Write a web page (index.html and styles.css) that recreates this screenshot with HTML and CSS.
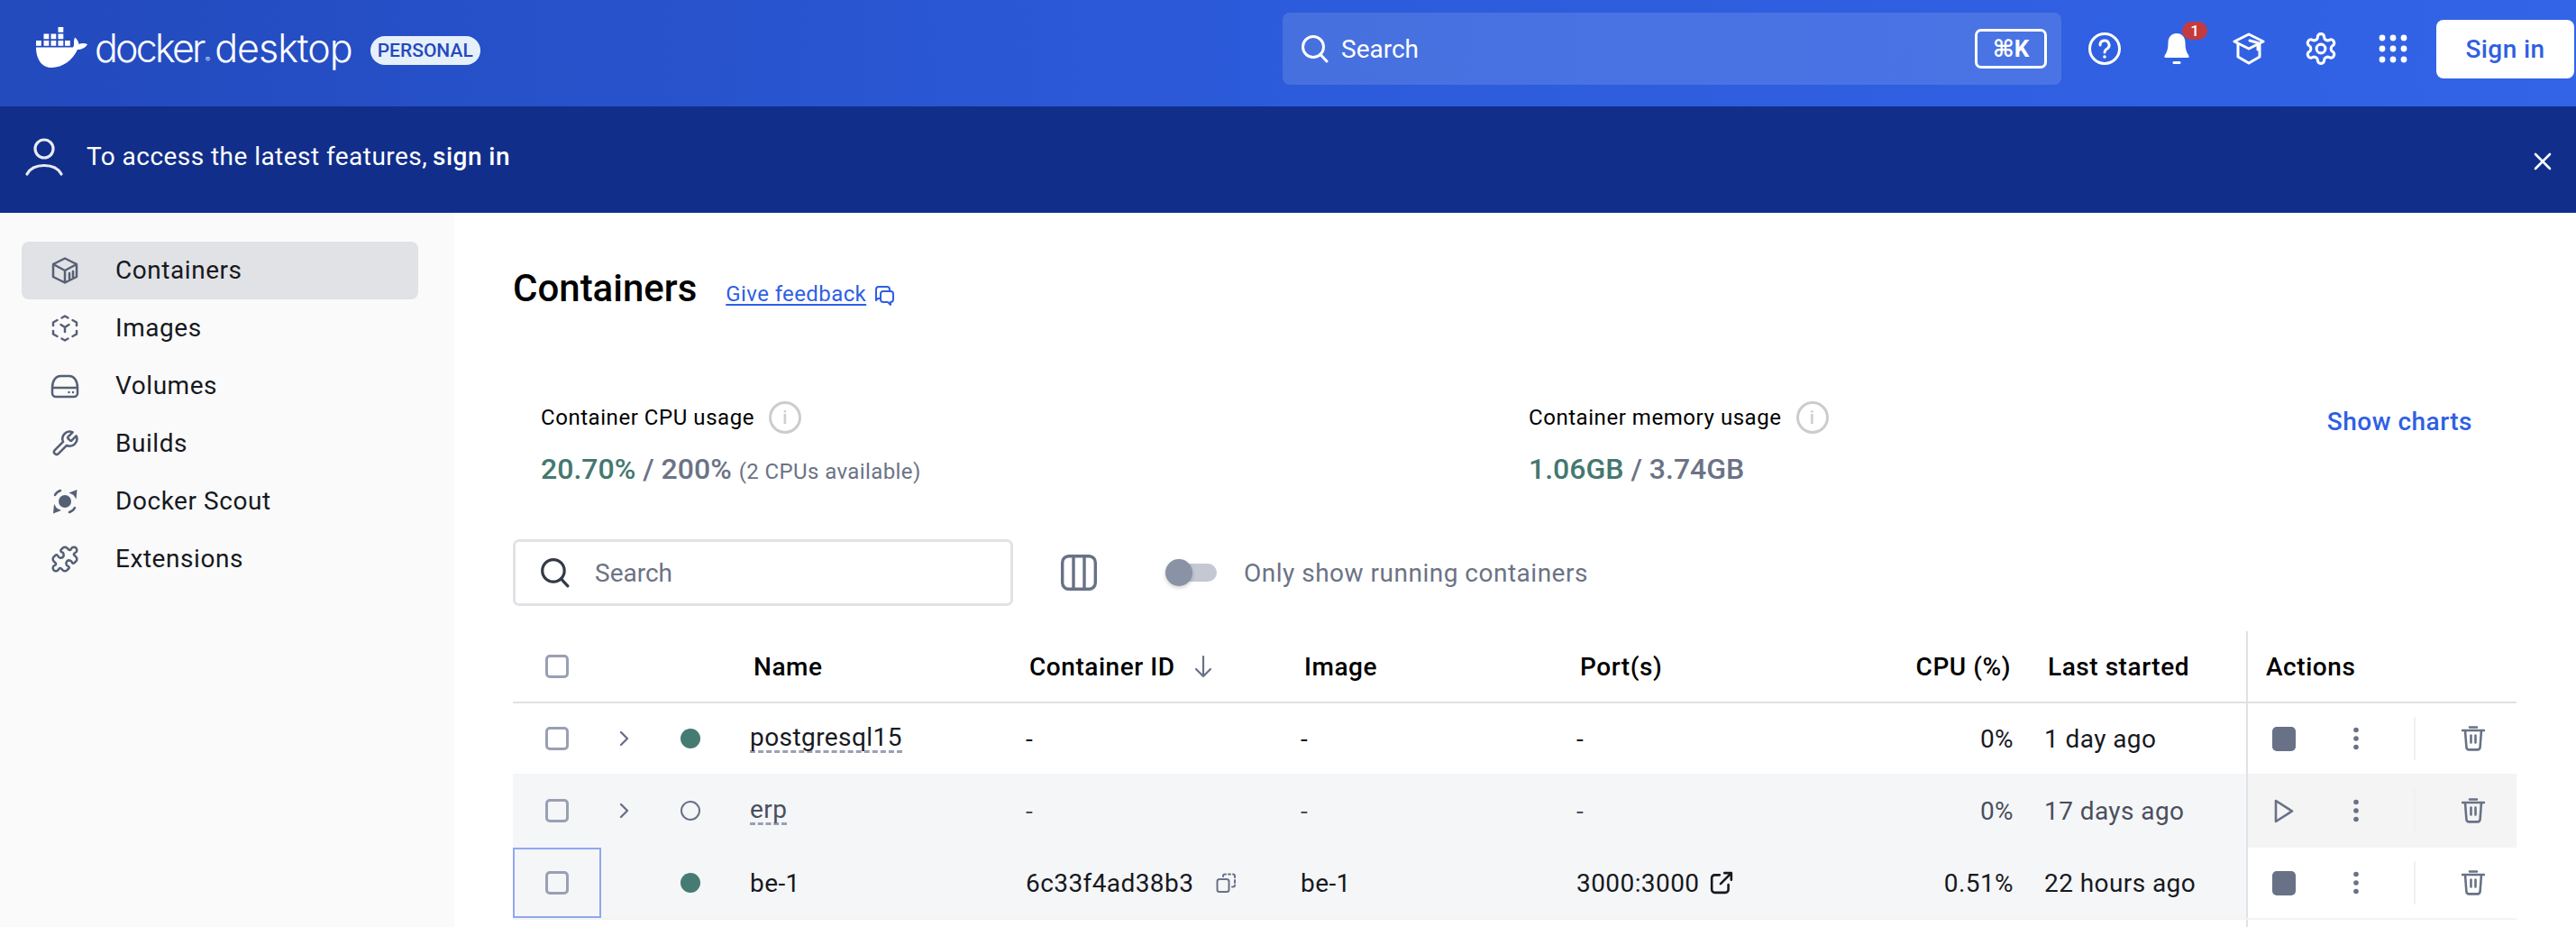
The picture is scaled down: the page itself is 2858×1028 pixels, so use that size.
FILE: index.html
```html
<!DOCTYPE html>
<html lang="en">
<head>
<meta charset="utf-8">
<title>Docker Desktop</title>
<link rel="stylesheet" href="styles.css">
</head>
<body>
<svg class="sprite" aria-hidden="true">
  <symbol id="i-search" viewBox="0 0 32 32"><circle cx="15" cy="14" r="11.5" fill="none" stroke="currentColor" stroke-width="3"/><path d="M23 22.5l7 7.5" fill="none" stroke="currentColor" stroke-width="3" stroke-linecap="round"/></symbol>
  <symbol id="i-trash" viewBox="0 0 26 28"><path d="M1 5h24M9 1.5h8M4 5l1.4 18.5a3 3 0 0 0 3 2.9h9.2a3 3 0 0 0 3-2.9L22 5M10.5 10.5v8M15.5 10.5v8" fill="none" stroke="currentColor" stroke-width="2.6" stroke-linecap="round"/></symbol>
  <symbol id="i-dots" viewBox="0 0 8 28"><circle cx="4" cy="4.500" r="2.800" fill="currentColor"/><circle cx="4" cy="14" r="2.800" fill="currentColor"/><circle cx="4" cy="23.500" r="2.800" fill="currentColor"/></symbol>
  <symbol id="i-chev" viewBox="0 0 12 18"><path d="M3 2l7 7-7 7" fill="none" stroke="currentColor" stroke-width="2.400" stroke-linecap="round" stroke-linejoin="round"/></symbol>
</svg>

<header class="topbar">
  <div class="brand">
    <svg class="whale" viewBox="0 0 57 45" fill="#fff"><rect x="24.500" width="5.800" height="5.800"/><rect x="8.500" y="7.500" width="5.800" height="5.800"/><rect x="16.500" y="7.500" width="5.800" height="5.800"/><rect x="24.500" y="7.500" width="5.800" height="5.800"/><rect y="15" width="5.800" height="5.800"/><rect x="8.500" y="15" width="5.800" height="5.800"/><rect x="16.500" y="15" width="5.800" height="5.800"/><rect x="24.500" y="15" width="5.800" height="5.800"/><rect x="32" y="15" width="5.800" height="5.800"/><path d="M0 22.500H41C43 20 41 16 43 11.500C46 13.500 47 16.500 47.500 19C50 17.500 54 17.500 57 19C55 23 50 25 46 25C41 36 30 45 17 45C6 45 0 35 0 22.500Z"/></svg>
    <span class="wordmark"><span class="wm-a">docker</span><span class="reg">®</span><span class="wm-b">desktop</span></span>
    <span class="pill">PERSONAL</span>
  </div>
  <div class="global-search">
    <svg class="gs-icon"><use href="#i-search"/></svg>
    <span class="gs-text">Search</span>
    <kbd class="kbd">⌘K</kbd>
  </div>
  <div class="top-icons">
    <span class="top-btn"><svg class="ti" viewBox="0 0 36 36" fill="none" stroke="#fff" stroke-width="3"><circle cx="18" cy="18" r="16.500"/><path d="M13 14a5 5 0 1 1 7.500 4.300c-1.600 1-2.500 1.900-2.500 3.700" stroke-linecap="round"/><circle cx="18" cy="27" r="1.800" fill="#fff" stroke="none"/></svg></span>
    <span class="top-btn"><svg class="ti" viewBox="0 0 36 36" fill="#fff"><path d="M18 1c-6 0-9.500 4.600-9.500 10.500 0 6-1 10-3.800 14-.8 1.200-.3 2.500 1.300 2.500h24c1.600 0 2.100-1.300 1.300-2.500-2.800-4-3.800-8-3.800-14C27.500 5.600 24 1 18 1z"/><rect x="13.500" y="32" width="9" height="3" rx="1.500"/></svg><span class="badge">1</span></span>
    <span class="top-btn"><svg class="ti" viewBox="0 0 36 36" fill="none" stroke="#fff" stroke-width="3" stroke-linejoin="round" stroke-linecap="round"><path d="M18 2L34 10 18 18 2 10z"/><path d="M6 13v14l12 7 12-7V13"/><path d="M19 9l9 2.500V19"/></svg></span>
    <span class="top-btn"><svg class="ti" viewBox="1 1 22 22" fill="none" stroke="#fff" stroke-width="1.900"><path d="M12.220 2h-.44a2 2 0 0 0-2 2v.18a2 2 0 0 1-1 1.730l-.43.25a2 2 0 0 1-2 0l-.15-.08a2 2 0 0 0-2.730.73l-.22.38a2 2 0 0 0 .73 2.730l.15.1a2 2 0 0 1 1 1.720v.51a2 2 0 0 1-1 1.740l-.15.09a2 2 0 0 0-.73 2.730l.22.38a2 2 0 0 0 2.730.73l.15-.08a2 2 0 0 1 2 0l.43.25a2 2 0 0 1 1 1.730V20a2 2 0 0 0 2 2h.44a2 2 0 0 0 2-2v-.18a2 2 0 0 1 1-1.730l.43-.25a2 2 0 0 1 2 0l.15.08a2 2 0 0 0 2.730-.73l.22-.39a2 2 0 0 0-.73-2.730l-.15-.08a2 2 0 0 1-1-1.740v-.5a2 2 0 0 1 1-1.740l.15-.09a2 2 0 0 0 .73-2.730l-.22-.38a2 2 0 0 0-2.730-.73l-.15.08a2 2 0 0 1-2 0l-.43-.25a2 2 0 0 1-1-1.730V4a2 2 0 0 0-2-2z"/><circle cx="12" cy="12" r="3"/></svg></span>
    <span class="top-btn"><svg class="ti" viewBox="0 0 36 36" fill="#fff"><circle cx="6" cy="6" r="3.400"/><circle cx="18" cy="6" r="3.400"/><circle cx="30" cy="6" r="3.400"/><circle cx="6" cy="18" r="3.400"/><circle cx="18" cy="18" r="3.400"/><circle cx="30" cy="18" r="3.400"/><circle cx="6" cy="30" r="3.400"/><circle cx="18" cy="30" r="3.400"/><circle cx="30" cy="30" r="3.400"/></svg></span>
  </div>
  <button class="signin">Sign in</button>
</header>

<div class="banner">
  <svg class="b-user" viewBox="0 0 44 44" fill="none" stroke="#e9ebf3" stroke-width="3.200" stroke-linecap="round"><circle cx="22" cy="13" r="10"/><path d="M3 41c3.500-6.500 10.500-9.500 19-9.500s15.500 3 19 9.500"/></svg>
  <span class="b-text">To access the latest features,</span>
  <strong class="b-link">sign in</strong>
  <svg class="b-close" viewBox="0 0 20 20" fill="none" stroke="#fff" stroke-width="2.600" stroke-linecap="round"><path d="M2 2l16 16M18 2L2 18"/></svg>
</div>

<div class="layout">
  <nav class="sidebar">
    <a class="nav-item active"><svg class="nav-icon" viewBox="0 0 32 32"><path d="M16 2.500L29 9v14l-13 6.500L3 23V9zM3 9l13 7 13-7M16 16v13.500M21 19v6M25 17v6"/></svg>Containers</a>
    <a class="nav-item"><svg class="nav-icon" viewBox="0 0 32 32"><path d="M12.500 4.500L16 2.500l3.500 2M24.500 7l4.500 2.500v3.500M29 19v3.500L24.500 25M19.500 27.500L16 29.500l-3.500-2M7.500 25L3 22.500V19M3 13V9.500L7.500 7M11.500 12l4.500 3 4.500-3M16 15v5"/></svg>Images</a>
    <a class="nav-item"><svg class="nav-icon" viewBox="0 0 32 32"><path d="M2 18v6a4 4 0 0 0 4 4h20a4 4 0 0 0 4-4v-6M2 18C2 10 6 5 11 5h10c5 0 9 5 9 13zM20.500 23h.01M25 23h.01"/></svg>Volumes</a>
    <a class="nav-item"><svg class="nav-icon" viewBox="0 0 24 24"><path class="thin" d="M14.700 6.300a1 1 0 0 0 0 1.400l1.600 1.600a1 1 0 0 0 1.400 0l3.770-3.770a6 6 0 0 1-7.940 7.940l-6.910 6.910a2.120 2.120 0 0 1-3-3l6.910-6.910a6 6 0 0 1 7.940-7.940l-3.760 3.760z"/></svg>Builds</a>
    <a class="nav-item"><svg class="nav-icon" viewBox="0 0 32 32"><circle class="solid" cx="16" cy="16" r="7"/><path class="solid" d="M29.500 3l-1 10.500-3-4.500-5-2.500zM3 29.500l1-10.500 3 4.500 5 2.500z"/><path d="M5 9c1-2 3-4 6-5M27 23c-1 2-3 4-6 5"/></svg>Docker Scout</a>
    <a class="nav-item"><svg class="nav-icon" viewBox="0 0 24 24"><path class="thin" d="M19.439 7.850c-.049.322.059.648.289.878l1.568 1.568c.47.47.706 1.087.706 1.704s-.235 1.233-.706 1.704l-1.611 1.611a.98.98 0 0 1-.837.276c-.47-.07-.802-.48-.968-.925a2.501 2.501 0 1 0-3.214 3.214c.446.166.855.497.925.968a.979.979 0 0 1-.276.837l-1.610 1.610a2.404 2.404 0 0 1-1.705.707 2.402 2.402 0 0 1-1.704-.706l-1.568-1.568a1.026 1.026 0 0 0-.877-.29c-.493.074-.84.504-1.020.968a2.500 2.500 0 1 1-3.237-3.237c.464-.18.894-.527.967-1.020a1.026 1.026 0 0 0-.289-.877l-1.568-1.568A2.402 2.402 0 0 1 1.998 12c0-.617.236-1.234.706-1.704L4.230 8.770c.24-.24.581-.353.917-.303.515.077.877.528 1.073 1.010a2.500 2.500 0 1 0 3.259-3.259c-.482-.196-.933-.558-1.010-1.073-.05-.336.062-.676.303-.917l1.525-1.525A2.402 2.402 0 0 1 12 1.998c.617 0 1.234.236 1.704.706l1.568 1.568c.23.23.556.338.877.29.493-.074.84-.504 1.020-.968a2.500 2.500 0 1 1 3.237 3.237c-.464.18-.894.527-.967 1.020Z"/></svg>Extensions</a>
  </nav>

  <main class="content">
    <div class="title-row">
      <h1 class="title">Containers</h1>
      <a class="feedback">Give feedback</a>
      <svg class="fb-icon" viewBox="0 0 24 24" fill="none" stroke="#2f5fe4" stroke-width="2" stroke-linejoin="round"><path d="M8 16H5l-2 2V6a3 3 0 0 1 3-3h9a3 3 0 0 1 3 3v2"/><path d="M11 8h8a3 3 0 0 1 3 3v6a3 3 0 0 1-3 3v3l-3-3h-5a3 3 0 0 1-3-3v-6a3 3 0 0 1 3-3z"/></svg>
    </div>

    <section class="stats">
      <div class="stat stat-cpu">
        <div class="stat-label">Container CPU usage<span class="info">i</span></div>
        <div class="stat-value"><span class="ok">20.70%</span> / 200% <small class="stat-note">(2 CPUs available)</small></div>
      </div>
      <div class="stat">
        <div class="stat-label">Container memory usage<span class="info">i</span></div>
        <div class="stat-value"><span class="ok">1.06GB</span> / 3.74GB</div>
      </div>
      <a class="show-charts">Show charts</a>
    </section>

    <div class="toolbar">
      <div class="search-box">
        <svg class="sb-icon"><use href="#i-search"/></svg>
        <span class="sb-text">Search</span>
      </div>
      <svg class="cols-icon" viewBox="0 0 40 40" fill="none" stroke="#687186" stroke-width="3.400"><rect x="1.700" y="1.700" width="36.600" height="36.600" rx="7"/><path d="M14 2v36M26 2v36"/></svg>
      <span class="toggle"><span class="toggle-thumb"></span></span>
      <span class="toggle-label">Only show running containers</span>
    </div>

    <div class="table">
      <div class="row head">
        <div class="cell c-sel"><span class="cb"></span></div>
        <div class="cell"></div>
        <div class="cell"></div>
        <div class="cell c-txt">Name</div>
        <div class="cell c-txt">Container ID<svg class="sort" viewBox="0 0 22 26" fill="none" stroke="#687186" stroke-width="2.200" stroke-linecap="round" stroke-linejoin="round"><path d="M11 2v22M3 16l8 8 8-8"/></svg></div>
        <div class="cell c-txt">Image</div>
        <div class="cell c-txt">Port(s)</div>
        <div class="cell c-num">CPU (%)</div>
        <div class="cell c-txt">Last started</div>
        <div class="cell c-act c-act-head">Actions</div>
      </div>

      <div class="row r1">
        <div class="cell c-sel"><span class="cb"></span></div>
        <div class="cell c-exp"><svg class="chev"><use href="#i-chev"/></svg></div>
        <div class="cell c-dot"><span class="dot"></span></div>
        <div class="cell c-val"><span class="link-name">postgresql15</span></div>
        <div class="cell c-val">-</div>
        <div class="cell c-val">-</div>
        <div class="cell c-val">-</div>
        <div class="cell c-numv">0%</div>
        <div class="cell c-val">1 day ago</div>
        <div class="cell c-act">
          <span class="act-btn"><span class="stop"></span></span>
          <span class="act-btn"><svg class="dots"><use href="#i-dots"/></svg></span>
          <span class="act-sep"></span>
          <svg class="trash"><use href="#i-trash"/></svg>
        </div>
      </div>

      <div class="row r2 muted">
        <div class="cell c-sel"><span class="cb"></span></div>
        <div class="cell c-exp"><svg class="chev"><use href="#i-chev"/></svg></div>
        <div class="cell c-dot"><span class="dot off"></span></div>
        <div class="cell c-val"><span class="link-name">erp</span></div>
        <div class="cell c-val">-</div>
        <div class="cell c-val">-</div>
        <div class="cell c-val">-</div>
        <div class="cell c-numv">0%</div>
        <div class="cell c-val">17 days ago</div>
        <div class="cell c-act">
          <span class="act-btn"><svg class="play" viewBox="0 0 22 27" fill="none" stroke="#687186" stroke-width="2.600" stroke-linejoin="round"><path d="M2 2l18 11.500L2 25z"/></svg></span>
          <span class="act-btn"><svg class="dots"><use href="#i-dots"/></svg></span>
          <span class="act-sep"></span>
          <svg class="trash"><use href="#i-trash"/></svg>
        </div>
      </div>

      <div class="row r3">
        <div class="cell c-sel focus"><span class="cb"></span></div>
        <div class="cell c-exp"></div>
        <div class="cell c-dot"><span class="dot"></span></div>
        <div class="cell c-val">be-1</div>
        <div class="cell c-val">6c33f4ad38b3<svg class="copy" viewBox="0 0 22 22" fill="none" stroke="#687186" stroke-width="2"><rect x="1.500" y="7" width="13" height="14" rx="2.500"/><path d="M8 4V3.500a2 2 0 0 1 2-2h1M14 1.500h2M19 1.500a2 2 0 0 1 2 2V5M21 8v3M21 13.500a2 2 0 0 1-2 2h-1" stroke-linecap="round"/></svg></div>
        <div class="cell c-val">be-1</div>
        <div class="cell c-val">3000:3000<svg class="open" viewBox="0 0 24 24" fill="none" stroke="#17191e" stroke-width="2.400" stroke-linecap="round" stroke-linejoin="round"><path d="M10 4H5a3 3 0 0 0-3 3v12a3 3 0 0 0 3 3h11a3 3 0 0 0 3-3v-5M11 13L22 2M15 2h7v7"/></svg></div>
        <div class="cell c-numv">0.51%</div>
        <div class="cell c-val">22 hours ago</div>
        <div class="cell c-act">
          <span class="act-btn"><span class="stop"></span></span>
          <span class="act-btn"><svg class="dots"><use href="#i-dots"/></svg></span>
          <span class="act-sep"></span>
          <svg class="trash"><use href="#i-trash"/></svg>
        </div>
      </div>
      <div class="tail"></div>
    </div>
  </main>
</div>
</body>
</html>
```

FILE: styles.css
```css
* { box-sizing: border-box; }
html, body { margin: 0; height: 1028px; overflow: hidden; }
body { font-family: Roboto, "Liberation Sans", sans-serif; font-size: 28px; color: #17191e; background: #fff; }
.sprite { display: none; }

.topbar { height: 118px; display: flex; align-items: flex-start; padding: 14px 2px 0 40px; background: linear-gradient(90deg, #234abd 0%, #2c5bdb 50%, #3363e6 100%); }
.brand { display: flex; align-items: center; height: 80px; margin-right: auto; }
.whale { width: 57px; height: 45px; margin-top: -4px; }
.wordmark { font-family: Inter, sans-serif; font-weight: 300; font-size: 43px; line-height: 1; color: #fff; margin-left: 8px; margin-top: -2px; display: flex; align-items: baseline; }
.wm-a { letter-spacing: -2.800px; }
.wm-b { letter-spacing: -1px; }
.reg { font-size: 8px; letter-spacing: 0; margin: 0 5px 0 2px; }
.pill { margin-left: 20px; margin-top: 4px; height: 32px; padding: 0 8px; border-radius: 16px; background: #e5f0fb; color: #2449bd; font-size: 21px; font-weight: 500; line-height: 32px; white-space: nowrap; }

.global-search { width: 864px; height: 80px; display: flex; align-items: center; padding: 0 16px 0 19px; border-radius: 8px; background: rgba(255,255,255,.13); color: #fff; }
.gs-icon { width: 32px; height: 32px; color: #fff; }
.gs-text { margin-left: 14px; margin-right: auto; }
.kbd { width: 80px; height: 44px; border: 3px solid #fff; border-radius: 7px; display: flex; align-items: center; justify-content: center; font-family: Roboto, "DejaVu Sans", sans-serif; font-size: 26px; font-weight: 700; }

.top-icons { display: flex; margin-left: 8px; height: 80px; }
.top-btn { position: relative; width: 80px; display: flex; align-items: center; justify-content: center; }
.ti { width: 36px; height: 36px; }
.badge { position: absolute; left: 46px; top: 10px; width: 28px; height: 20px; border-radius: 10px; background: #c43b3f; color: #fff; font-size: 17px; font-weight: 500; line-height: 20px; text-align: center; }
.signin { margin: 8px 0 0 8px; width: 153px; height: 65px; border: 0; border-radius: 8px; background: #fff; color: #2f5fe4; font: 500 28px Roboto, sans-serif; letter-spacing: .4px; padding: 0; }

.banner { height: 118px; display: flex; align-items: center; padding: 0 26px 8px 27px; background: #112e8a; color: #fff; }
.b-user { width: 44px; height: 44px; margin-right: 25px; margin-top: 2px; }
.b-text { letter-spacing: .45px; }
.b-link { margin-left: 6px; font-weight: 500; letter-spacing: .45px; }
.b-close { width: 20px; height: 20px; margin-left: auto; margin-right: 1px; margin-top: 12px; }

.layout { display: flex; height: 792px; }
.sidebar { width: 504px; flex: none; background: #fafafa; padding: 32px 40px 0 24px; }
.nav-item { display: flex; align-items: center; height: 64px; border-radius: 8px; padding: 0 0 1px 32px; font-size: 28px; color: #17191e; letter-spacing: .55px; }
.nav-item.active { background: #e1e2e6; }
.nav-icon { width: 32px; height: 32px; margin-right: 40px; flex: none; fill: none; stroke: #566075; stroke-width: 2.500; stroke-linejoin: round; stroke-linecap: round; }
.nav-icon .thin { stroke-width: 1.900; }
.nav-icon .solid { fill: #566075; stroke: none; }

.content { flex: 1; padding: 54px 66px 0 65px; min-width: 0; }
.title-row { display: flex; align-items: center; height: 60px; }
.title { margin: 0; font-size: 42px; font-weight: 500; color: #000; line-height: 60px; }
.feedback { margin-left: 32px; margin-top: 11px; font-size: 24px; color: #2f5fe4; text-decoration: underline; text-underline-offset: 3px; letter-spacing: .4px; }
.fb-icon { width: 24px; height: 24px; margin: 13px 0 0 8px; }

.stats { display: flex; margin-top: 90px; height: 100px; padding-left: 31px; }
.stat-cpu { width: 1096px; flex: none; }
.stat-label { display: flex; align-items: center; height: 46px; font-size: 24px; color: #000; letter-spacing: .55px; }
.info { width: 36px; height: 36px; margin-left: 16px; border: 3px solid #ccc; border-radius: 50%; color: #ccc; font: 500 20px/30px Roboto, sans-serif; text-align: center; }
.stat-value { margin-top: 14px; font-size: 32px; font-weight: 500; line-height: 40px; color: #6b7385; }
.ok { color: #44786f; }
.stat-note { font-size: 24px; font-weight: 400; letter-spacing: .4px; }
.show-charts { margin-left: auto; margin-right: 49px; margin-top: 11px; line-height: 34px; font-weight: 500; font-size: 28px; color: #2f5fe4; letter-spacing: .5px; }

.toolbar { display: flex; align-items: center; height: 74px; margin-top: 58px; }
.search-box { width: 555px; height: 74px; display: flex; align-items: center; padding: 0 0 0 26px; border: 3px solid #e1e2e6; border-radius: 7px; }
.sb-icon { width: 34px; height: 34px; color: #333a47; }
.sb-text { margin-left: 28px; color: #6b7385; }
.cols-icon { width: 40px; height: 40px; margin-left: 53px; }
.toggle { width: 57px; height: 20px; margin-left: 76px; border-radius: 10px; background: #c4c8d3; display: flex; align-items: center; }
.toggle-thumb { width: 30px; height: 30px; border-radius: 50%; background: #8a92a5; box-shadow: 0 2px 4px rgba(0,0,0,.2); }
.toggle-label { margin-left: 30px; color: #6b7385; letter-spacing: .5px; }

.table { margin-top: 28px; }
.row { display: grid; grid-template-columns: 98px 50px 98px 306px 305px 306px 358px 161px 241px 300px; align-items: stretch; }
.cell { display: flex; align-items: center; min-width: 0; white-space: nowrap; }
.head { height: 80px; border-bottom: 2px solid #e1e1e1; font-weight: 500; color: #000; letter-spacing: .55px; }
.head .c-txt { padding-left: 21px; }
.c-sel { justify-content: center; }
.c-exp, .c-dot { justify-content: center; }
.c-val { padding-left: 17px; letter-spacing: .42px; }
.c-num { justify-content: flex-end; padding-right: 20px; }
.c-numv { justify-content: flex-end; padding-right: 17px; letter-spacing: .42px; }
.c-act { border-left: 2px solid #e1e2e6; padding-left: 0; background: #fff; }
.c-act-head { padding-left: 20px; }
.cb { width: 26px; height: 26px; border: 3px solid #9aa0b3; border-radius: 5px; background: transparent; }
.chev { width: 12px; height: 18px; color: #687186; }
.dot { width: 22px; height: 22px; border-radius: 50%; background: #457b72; }
.dot.off { background: transparent; border: 2px solid #687186; }
.link-name { border-bottom: 3px dashed #9aa0b3; line-height: 29px; }
.r1 { height: 78px; }
.r2 { height: 82px; background: #f5f6f8; }
.r2 .c-act { background: #f4f4f4; }
.r3 { height: 80px; background: #f5f6f8; border-bottom: 2px solid #f3f3f4; }
.muted { color: #4a4f5c; }
.focus { outline: 2px solid #8fa8ef; outline-offset: -2px; }
.act-btn { width: 80px; height: 100%; display: flex; align-items: center; justify-content: center; }
.stop { width: 26px; height: 27px; border-radius: 5px; background: #687186; }
.play { width: 22px; height: 27px; }
.dots { width: 8px; height: 28px; color: #687186; }
.act-sep { width: 2px; height: 48px; margin-left: 24px; background: #f0f0f0; }
.trash { width: 26px; height: 28px; margin-left: 51px; color: #687186; }
.copy { width: 22px; height: 22px; margin-left: 25px; }
.open { width: 26px; height: 26px; margin-left: 12px; }
.sort { width: 22px; height: 26px; margin-left: 20px; }
.tail { height: 8px; margin-left: 1923px; border-left: 2px solid #e1e2e6; }
```
